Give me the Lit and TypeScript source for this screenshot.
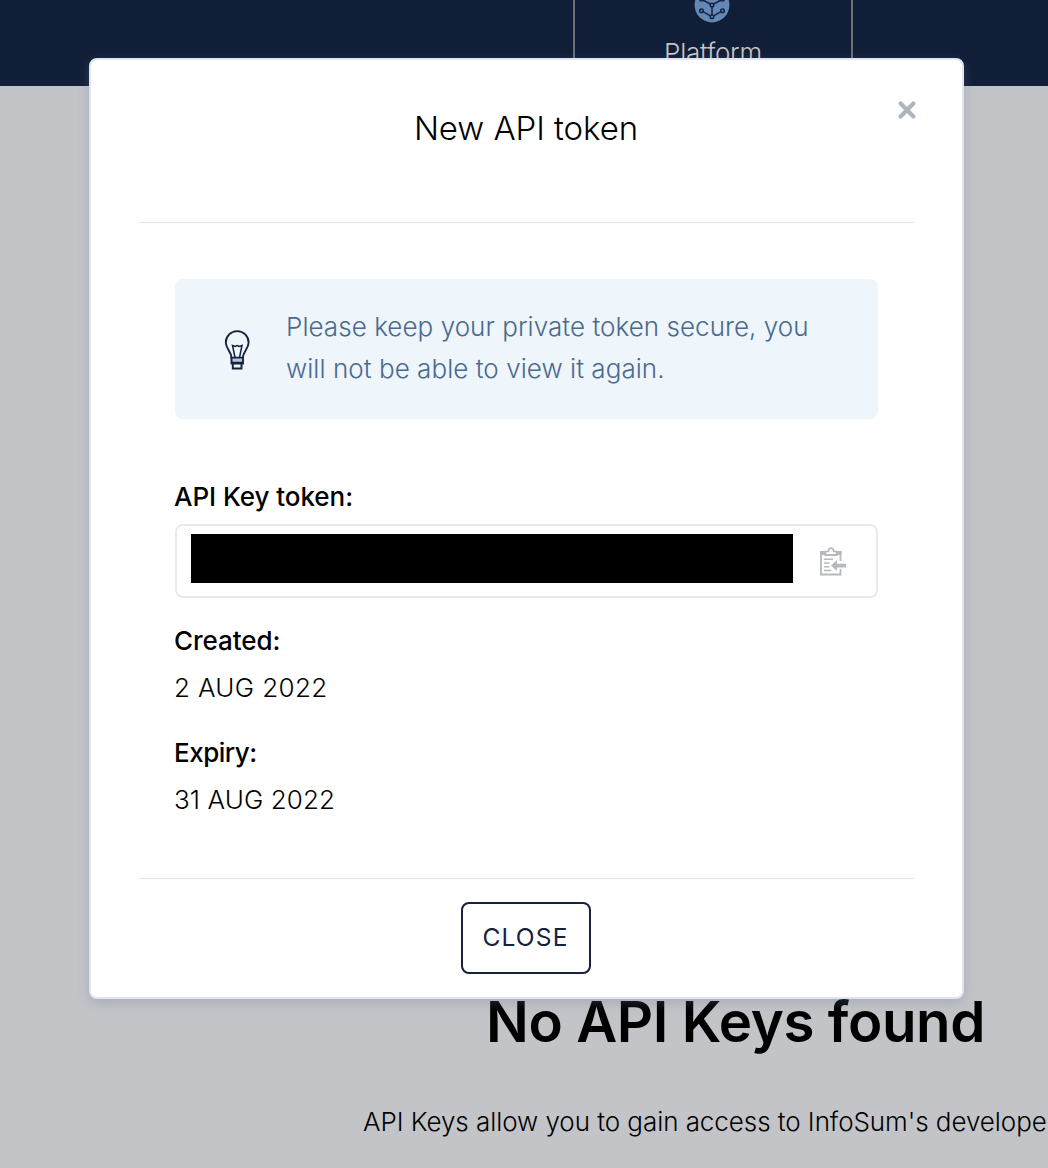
import { LitElement, html, css } from "lit";
import { customElement } from "lit/decorators.js";

@customElement("app-root")
class AppRoot extends LitElement {
  static styles = css`
    :host {
      display: block;
      position: relative;
      width: 1048px;
      height: 1168px;
      overflow: hidden;
      background: #c3c4c8;
      color: #000;
      font-family: Inter, "Liberation Sans", sans-serif;
      font-size: 26px;
      font-weight: 300;
    }
    * { box-sizing: border-box; }
    h1, h2, p, dl, dt, dd { margin: 0; }
    svg { display: block; }
    .page { display: flex; flex-direction: column; height: 1168px; }
    .nav {
      display: flex;
      height: 86px;
      padding-left: 573px;
      background: #111e38;
    }
    .tab {
      display: flex;
      flex-direction: column;
      align-items: center;
      width: 280px;
      border: 2px solid #6e6f72;
      border-width: 0 2px;
      color: #c8c6c6;
    }
    .tab svg { margin: -13px 2px 0 0; }
    .tab-name { margin-top: 14px; line-height: 32px; letter-spacing: -0.26px; }
    .empty { display: flex; flex-direction: column; padding-left: 363px; margin-top: 901px; }
    .empty h2 {
      margin-left: 120px;
      line-height: 70px;
      font-size: 56.4px;
      font-weight: 600;
      letter-spacing: -0.4px;
      white-space: nowrap;
    }
    .empty h2 { margin-left: 123px; }
    .empty p { margin-top: 49px; line-height: 32px; letter-spacing: -0.06px; white-space: nowrap; }
    .modal {
      position: absolute;
      left: 89px;
      top: 58px;
      display: flex;
      flex-direction: column;
      width: 875px;
      height: 941px;
      padding: 0 48px 0 47px;
      border: 2px solid #dfe6ee;
      border-radius: 8px;
      background: #fff;
      box-shadow: 0 4px 12px rgba(105, 125, 165, 0.32);
    }
    .head {
      display: flex;
      justify-content: center;
      height: 163px;
      padding-top: 48px;
      border-bottom: 1px solid #dde8ef;
    }
    .head h1 { font-size: 33px; line-height: 40px; font-weight: 300; letter-spacing: -0.06px; }
    .dismiss { position: absolute; right: 45px; top: 40px; }
    .body { height: 656px; padding: 56px 36px 0 37px; border-bottom: 1px solid #dde8ef; }
    .tip {
      display: flex;
      align-items: center;
      height: 140px;
      padding-left: 49px;
      border-radius: 8px;
      background: #eef5fb;
      color: #4a698f;
    }
    .tip svg { margin-top: 2px; }
    .tip p { margin: -3px 0 0 34px; line-height: 42px; letter-spacing: 0.05px; white-space: nowrap; }
    dl { display: flex; flex-direction: column; }
    dt, dd { line-height: 32px; }
    dt { text-indent: -1px; font-weight: 500; letter-spacing: -0.05px; }
    .key { margin-top: 62px; }
    .field {
      display: flex;
      align-items: center;
      justify-content: space-between;
      height: 74px;
      margin: 11px 0 27px;
      padding: 0 29px 4px 13.5px;
      border: 2px solid #e7ebf0;
      border-radius: 8px;
    }
    .secret { width: 602px; height: 49px; margin-top: -1px; background: #000; }
    .field svg { margin-top: 5px; }
    .date { margin: 15px 0 33px; text-indent: -1px; letter-spacing: 0.36px; }
    .last { margin-top: 15px; text-indent: -1px; letter-spacing: 0.1px; }
    .expiry { letter-spacing: -0.5px; }
    .foot { display: flex; justify-content: center; padding-top: 23px; }
    .close {
      width: 130px;
      height: 72px;
      margin-right: 1px;
      padding: 0 0 2px;
      border: 2px solid #14223e;
      border-radius: 8px;
      background: #fff;
      color: #14223e;
      font: 400 24.6px/30px Inter, "Liberation Sans", sans-serif;
      letter-spacing: 1.1px;
    }
  `;

  render() {
    return html`
      <div class="page">
        <nav class="nav">
          <div class="tab">
            <svg width="36" height="36" viewBox="0 0 36 36" fill="none" stroke="#14223e" stroke-width="1.5">
              <circle cx="18" cy="18" r="17.4" fill="#6488b6" stroke="none" />
              <path d="M18 20v7.5M16.4 28.8L9 24.7M19.6 28.8L27 24.7M16.3 17L9 13M19.7 17L27 13" />
              <g fill="#6488b6">
                <circle cx="18" cy="18" r="1.8" />
                <circle cx="18" cy="29.7" r="1.8" />
                <circle cx="7.5" cy="23.8" r="1.8" />
                <circle cx="28.5" cy="23.8" r="1.8" />
                <circle cx="7.5" cy="12.2" r="1.8" />
                <circle cx="28.5" cy="12.2" r="1.8" />
              </g>
            </svg>
            <span class="tab-name">Platform</span>
          </div>
        </nav>
        <section class="empty">
          <h2>No API Keys found</h2>
          <p>API Keys allow you to gain access to InfoSum's develope</p>
        </section>
      </div>
      <div class="modal">
        <header class="head"><h1>New API token</h1></header>
        <svg class="dismiss" width="20" height="20" viewBox="0 0 20 20" stroke="#adb5bd" stroke-width="4.3" stroke-linecap="round">
          <path d="M3.6 3.6l12.8 12.8M16.4 3.6L3.6 16.4" />
        </svg>
        <div class="body">
          <div class="tip">
            <svg width="28" height="40" viewBox="0 0 28 40" fill="none" stroke="#14223e" stroke-width="1.9">
              <path fill="#b9c5d3" stroke="none" d="M7.500 28h12v5h-12z" />
              <path d="M7.500 27.600C7.300 21.500 1.800 18.800 1.800 12.500a11.400 11.400 0 0 1 22.800 0c0 6.300-5.500 9-5.700 15.100z" />
              <path d="M7.500 27v6.500h11.500V27M8.800 33.500v5h8.700v-5M7.500 32.800h11.500" />
              <path stroke-width="1.500" d="M11 27.500L8.500 15.500l2.500 1 2.200-1 2.200 1 2.600-1L15.500 27.500" />
            </svg>
            <p>Please keep your private token secure, you<br />will not be able to view it again.</p>
          </div>
          <dl>
            <dt class="key">API Key token:</dt>
            <dd class="field">
              <div class="secret"></div>
              <svg width="28" height="29" viewBox="0 0 28 29" fill="none" stroke="#b4bac0" stroke-width="1.800">
                <path d="M21.500 14V5H2v22.500h19.500V22" />
                <path fill="#b4bac0" stroke="none" d="M1 4h6.500l1.500 4h6l1.500-4h6v4H19l-1 1H6L5 8H1z" />
                <path fill="#fff" stroke-width="1.700" d="M6.500 7.800V4.500h2.700C9.500 2.500 10.300 1.200 12 1.200s2.500 1.300 2.800 3.300h2.700v3.300z" />
                <path d="M5 12.200h9M5 16h5.500M5 19.800h5.500M5 23.600h7.500" stroke-width="1.500" />
                <path fill="#b4bac0" stroke="none" d="M12 18.500l6-5.500v3.800h9v3.600h-9V24z" />
              </svg>
            </dd>
            <dt>Created:</dt>
            <dd class="date">2 AUG 2022</dd>
            <dt class="expiry">Expiry:</dt>
            <dd class="last">31 AUG 2022</dd>
          </dl>
        </div>
        <footer class="foot"><button class="close">CLOSE</button></footer>
      </div>
    `;
  }
}
